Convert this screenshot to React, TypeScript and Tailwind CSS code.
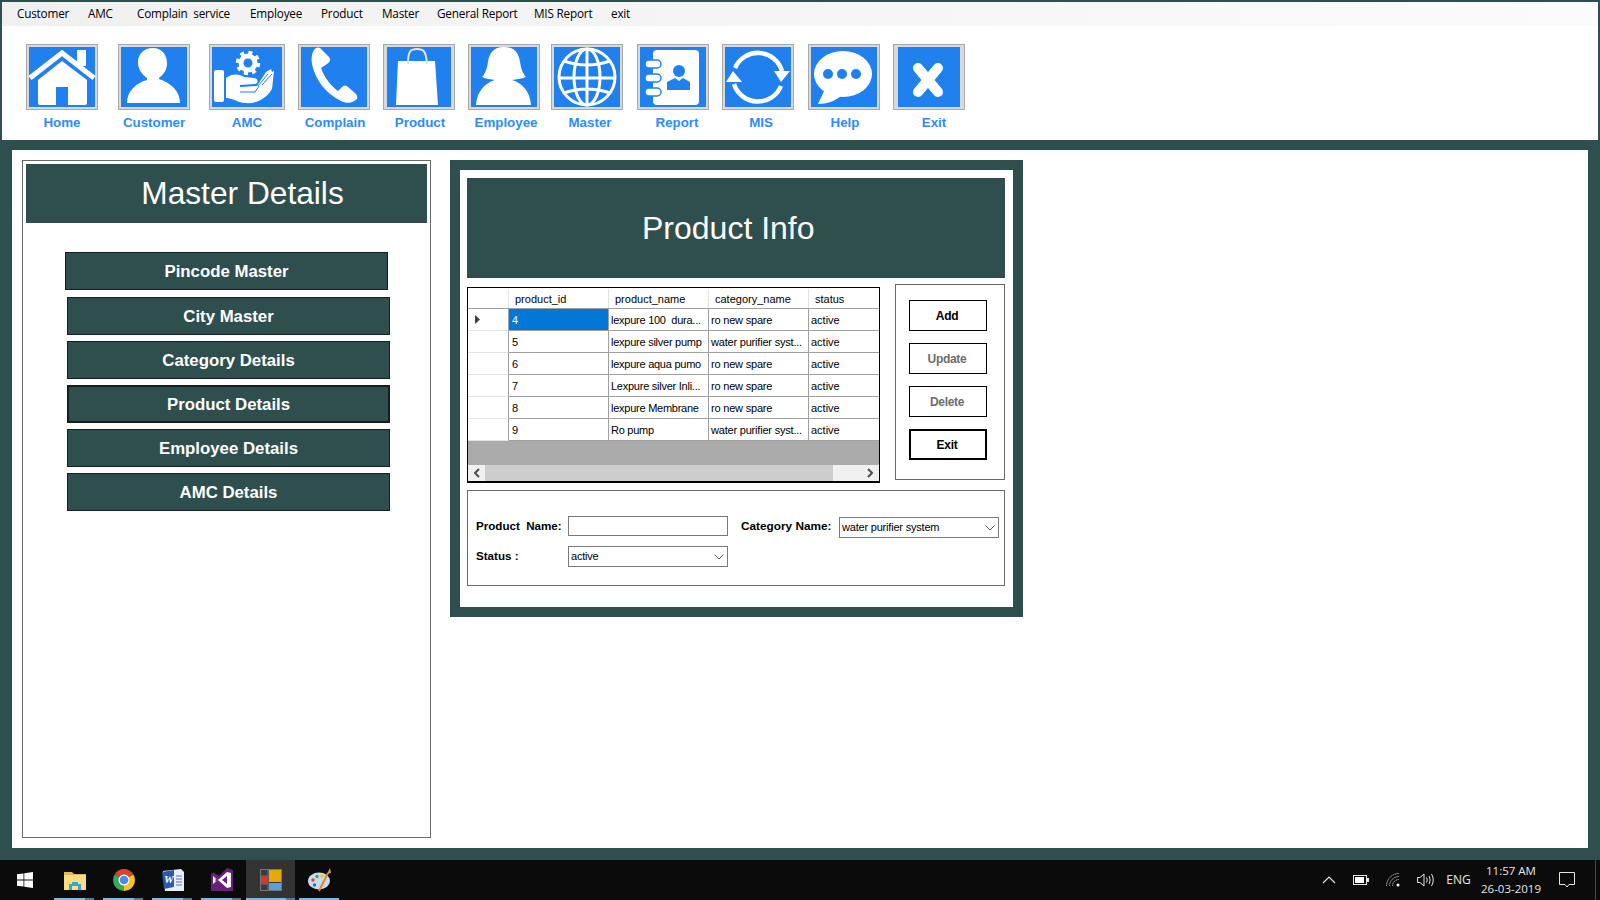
import React from "react";

const BLUE = "#2080ee";

const HomeIcon = () => (
  <svg viewBox="0 0 66 60" className="w-full h-full">
    <polyline points="1,31 33,6 65,31" fill="none" stroke="#fff" strokeWidth="5" />
    <rect x="48" y="3" width="9" height="16" fill="#fff" />
    <path d="M9 33 L33 14 L58 33 V56 Q58 58 56 58 H11 Q9 58 9 56 Z" fill="#fff" />
    <rect x="27" y="40" width="12" height="18" fill={BLUE} />
  </svg>
);

const CustomerIcon = () => (
  <svg viewBox="0 0 66 60" className="w-full h-full">
    <path
      d="M32 1 C41 1 46 8 46 16 C46 23 43 27 38 31 L38 32 C50 36 59 44 59 56 L6 56 C6 44 15 36 26 33 L26 31 C21 27 17 23 17 15 C17 7 23 1 32 1 Z"
      fill="#fff"
    />
  </svg>
);

const AmcIcon = () => (
  <svg viewBox="0 0 70 60" className="w-full h-full">
    <circle cx="36" cy="16" r="7" fill="none" stroke="#fff" strokeWidth="5" />
    <circle cx="36" cy="16" r="10.5" fill="none" stroke="#fff" strokeWidth="3.5" strokeDasharray="4 4.25" />
    <rect x="2" y="23" width="10" height="32" rx="2" fill="#fff" />
    <path
      d="M14 31 C20 26 28 27 32 30 L42 31 C46 31 47 36 43 37 L28 38 V40 L45 39 L54 25 L59 22 L60 25 L62 24 L60 42 C54 52 44 57 33 56 C27 56 20 51 14 51 Z"
      fill="#fff"
    />
    <path d="M46 39 L56 27 M50 38 L60 27 M28 45 H43 L47 39" fill="none" stroke={BLUE} strokeWidth="1" />
  </svg>
);

const PhoneIcon = () => (
  <svg viewBox="0 0 66 60" className="w-full h-full">
    <path
      d="M15 1 C11 4 10 10 11 17 C14 32 24 46 40 54 C46 57 52 56 56 52 C57 50 56 48 54 46 L47 40 C45 38 43 38 41 40 L37 44 C30 39 23 30 20 21 L26 17 C29 15 30 13 28 10 L21 3 C19 0 17 0 15 1 Z"
      fill="#fff"
    />
  </svg>
);

const BagIcon = () => (
  <svg viewBox="0 0 64 60" className="w-full h-full">
    <path d="M11 14 H48 L51 58 H9 Z" fill="#fff" />
    <path d="M21 17 C21 3 24 2 30 2 C36 2 39 3 40 17" fill="none" stroke="#e4e4e4" strokeWidth="2" />
  </svg>
);

const EmployeeIcon = () => (
  <svg viewBox="0 0 66 60" className="w-full h-full">
    <path
      d="M33 0 C45 0 48 8 49 15 C50 22 52 27 55 30 C50 32 45 32 41 33 C51 36 59 44 60 58 H5 C6 44 14 36 24 33 C20 32 15 32 11 30 C14 27 16 22 17 15 C18 8 21 0 33 0 Z"
      fill="#fff"
    />
  </svg>
);

const GlobeIcon = () => (
  <svg viewBox="0 0 66 60" className="w-full h-full" fill="none" stroke="#fff" strokeWidth="3">
    <circle cx="33" cy="30" r="28" />
    <ellipse cx="33" cy="30" rx="13" ry="28" />
    <path d="M33 2 V58 M5 31 H61 M10 14 Q33 22 56 14 M10 46 Q33 38 56 46" />
  </svg>
);

const ReportIcon = () => (
  <svg viewBox="0 0 66 60" className="w-full h-full">
    <rect x="13" y="3" width="46" height="55" rx="4" fill="#fff" />
    <circle cx="39" cy="24" r="6" fill={BLUE} />
    <path d="M27 43 V35 L35 31 L39 34 L43 31 L50 35 V43 Z" fill={BLUE} />
    <rect x="5" y="13" width="16" height="8" rx="4" fill="#fff" stroke={BLUE} strokeWidth="1.5" />
    <rect x="5" y="27" width="16" height="8" rx="4" fill="#fff" stroke={BLUE} strokeWidth="1.5" />
    <rect x="5" y="41" width="16" height="8" rx="4" fill="#fff" stroke={BLUE} strokeWidth="1.5" />
  </svg>
);

const SyncIcon = () => (
  <svg viewBox="0 0 66 60" className="w-full h-full">
    <path d="M10 21 A25 25 0 0 1 57 24" fill="none" stroke="#fff" strokeWidth="4.5" />
    <path d="M49 24 L65 24 L56 35 Z" fill="#fff" />
    <path d="M56 39 A25 25 0 0 1 9 37" fill="none" stroke="#fff" strokeWidth="4.5" />
    <path d="M1 35 L17 35 L8 24 Z" fill="#fff" />
  </svg>
);

const HelpIcon = () => (
  <svg viewBox="0 0 66 60" className="w-full h-full">
    <ellipse cx="32" cy="27" rx="29" ry="23" fill="#fff" />
    <path d="M14 42 L7 57 C16 57 24 54 30 49 Z" fill="#fff" />
    <circle cx="17" cy="27" r="5" fill={BLUE} />
    <circle cx="31" cy="27" r="5" fill={BLUE} />
    <circle cx="45" cy="27" r="5" fill={BLUE} />
  </svg>
);

const ExitIcon = () => (
  <svg viewBox="0 0 62 60" className="w-full h-full">
    <path d="M20 21 L40 45 M40 21 L20 45" stroke="#fff" strokeWidth="10" strokeLinecap="round" />
  </svg>
);

const menuItems = [
  { label: "Customer", cls: "w-[71px]" },
  { label: "AMC", cls: "w-[49px]" },
  { label: "Complain  service", cls: "w-[113px]" },
  { label: "Employee", cls: "w-[71px]" },
  { label: "Product", cls: "w-[61px]" },
  { label: "Master", cls: "w-[55px]" },
  { label: "General Report", cls: "w-[97px]" },
  { label: "MIS Report", cls: "w-[77px]" },
  { label: "exit", cls: "w-[40px]" },
];

const toolItems = [
  { label: "Home", icon: <HomeIcon />, cls: "ml-[24px] w-[72px]", pad: "px-[2px]", shift: "" },
  { label: "Customer", icon: <CustomerIcon />, cls: "ml-[20px] w-[72px]", pad: "px-[2px]", shift: "" },
  { label: "AMC", icon: <AmcIcon />, cls: "ml-[19px] w-[76px]", pad: "px-[2px]", shift: "" },
  { label: "Complain", icon: <PhoneIcon />, cls: "ml-[13px] w-[72px]", pad: "px-[2px]", shift: "pl-[2px]" },
  { label: "Product", icon: <BagIcon />, cls: "ml-[13px] w-[72px]", pad: "px-[3px]", shift: "pl-[2px]" },
  { label: "Employee", icon: <EmployeeIcon />, cls: "ml-[13px] w-[72px]", pad: "px-[2px]", shift: "pl-[4px]" },
  { label: "Master", icon: <GlobeIcon />, cls: "ml-[11px] w-[72px]", pad: "px-[2px]", shift: "pl-[6px]" },
  { label: "Report", icon: <ReportIcon />, cls: "ml-[14px] w-[72px]", pad: "px-[2px]", shift: "pl-[8px]" },
  { label: "MIS", icon: <SyncIcon />, cls: "ml-[13px] w-[72px]", pad: "px-[2px]", shift: "pl-[6px]" },
  { label: "Help", icon: <HelpIcon />, cls: "ml-[14px] w-[72px]", pad: "px-[2px]", shift: "pl-[2px]" },
  { label: "Exit", icon: <ExitIcon />, cls: "ml-[13px] w-[72px]", pad: "px-[4px]", shift: "pl-[10px]" },
];

const masterButtons = [
  { label: "Pincode Master", cls: "ml-[39px] mt-[29px] border" },
  { label: "City Master", cls: "ml-[41px] mt-[7px] border" },
  { label: "Category Details", cls: "ml-[41px] mt-[6px] border" },
  { label: "Product Details", cls: "ml-[41px] mt-[6px] border-2" },
  { label: "Employee Details", cls: "ml-[41px] mt-[6px] border" },
  { label: "AMC Details", cls: "ml-[41px] mt-[6px] border" },
];

const rows = [
  { id: "4", name: "lexpure 100  dura...", category: "ro new spare" },
  { id: "5", name: "lexpure silver pump", category: "water purifier syst..." },
  { id: "6", name: "lexpure aqua pumo", category: "ro new spare" },
  { id: "7", name: "Lexpure silver Inli...", category: "ro new spare" },
  { id: "8", name: "lexpure Membrane", category: "ro new spare" },
  { id: "9", name: "Ro pump", category: "water purifier syst..." },
];

const Chevron = () => (
  <svg viewBox="0 0 10 6" className="w-[10px] h-[6px]" fill="none" stroke="#555" strokeWidth="1">
    <path d="M0.5 0.5 L5 5 L9.5 0.5" />
  </svg>
);

const DropDown = ({ value }: { value: string }) => (
  <div className="w-[160px] h-[21px] border border-[#7a7a7a] flex items-center justify-between pl-[2px] pr-[3px] text-[11px] tracking-[-0.2px] text-black">
    <span>{value}</span>
    <Chevron />
  </div>
);

const ActionButton = ({ label, cls }: { label: string; cls: string }) => (
  <div className={`w-[78px] h-[31px] border-black flex items-center justify-center pr-[2px] text-[12px] font-bold tracking-[-0.3px] ${cls}`}>
    {label}
  </div>
);

const TaskSlot = ({
  children,
  active,
  stacked,
}: {
  children: React.ReactNode;
  active?: boolean;
  stacked?: boolean;
}) => (
  <div className={`relative w-[49px] h-[40px] flex items-center justify-center ${active ? "bg-[#333333]" : ""}`}>
    {children}
    <div className={`absolute bottom-0 h-[2px] bg-[#76b9ed] ${active ? "left-0 right-0" : "left-[4px] right-[5px]"}`} />
    {stacked && <div className={`absolute bottom-0 h-[2px] w-[9px] bg-[#4f7c9e] ${active ? "right-0" : "right-[5px]"}`} />}
  </div>
);

const App = () => {
  return (
    <div className="w-[1600px] h-[900px] overflow-hidden bg-[#2f4f4f] flex flex-col font-['Liberation_Sans',Arial,sans-serif]">
      <div className="mt-[2px] mx-[2px] h-[138px] bg-white shrink-0">
        <div className="h-[24px] flex items-center pl-[15px] bg-gradient-to-r from-[#f0f0f0] to-[#fbfbfb] text-[11.75px] tracking-[-0.2px] text-black font-['Open_Sans',sans-serif]">
          {menuItems.map((item) => (
            <span key={item.label} className={`whitespace-pre shrink-0 ${item.cls}`}>
              {item.label}
            </span>
          ))}
        </div>
        <div className="flex pt-[18px]">
          {toolItems.map((item) => (
            <div key={item.label} className={`shrink-0 flex flex-col ${item.cls}`}>
              <div className={`h-[66px] border border-[#a9a9a9] bg-[#d9d9d9] py-[2px] ${item.pad}`}>
                <div className="w-full h-[60px] bg-[#2080ee]">{item.icon}</div>
              </div>
              <div className={`mt-[5px] h-[16px] leading-[16px] text-center whitespace-nowrap text-[13.33px] font-bold text-[#2b8cff] ${item.shift}`}>
                {item.label}
              </div>
            </div>
          ))}
        </div>
      </div>

      <div className="mt-[10px] mx-[12px] h-[698px] bg-white shrink-0 flex items-start pl-[10px] pt-[10px]">
        <div className="w-[409px] h-[678px] border border-[#696969] p-[3px] shrink-0">
          <div className="h-[59px] bg-[#2f4f4f] flex items-center justify-center pl-[32px] text-white text-[31.7px] leading-none">
            Master Details
          </div>
          {masterButtons.map((btn) => (
            <div
              key={btn.label}
              className={`w-[323px] h-[38px] bg-[#2f4f4f] border-[#141f1f] flex items-center justify-center pt-[1px] text-white text-[16.8px] font-bold ${btn.cls}`}
            >
              {btn.label}
            </div>
          ))}
        </div>

        <div className="ml-[19px] w-[573px] h-[457px] border-[10px] border-[#2f4f4f] bg-white pt-[8px] pl-[7px] shrink-0">
          <div className="w-[538px] h-[100px] bg-[#2f4f4f] flex items-center pl-[175px] text-white text-[32px] leading-none">
            Product Info
          </div>

          <div className="flex items-start mt-[6px]">
            <div className="mt-[3px] w-[413px] h-[196px] border border-b-2 border-black pt-[1px] flex flex-col text-[11px] text-black shrink-0">
              <div className="flex h-[20px] border-b border-[#a0a0a0] shrink-0">
                <div className="w-[41px] border-r border-[#e3e3e3]" />
                <div className="w-[100px] border-r border-[#e3e3e3] pl-[6px] leading-[21px]">product_id</div>
                <div className="w-[100px] border-r border-[#e3e3e3] pl-[6px] leading-[21px]">product_name</div>
                <div className="w-[100px] border-r border-[#e3e3e3] pl-[6px] leading-[21px]">category_name</div>
                <div className="flex-1 pl-[6px] leading-[21px]">status</div>
              </div>
              {rows.map((row, i) => (
                <div key={row.id} className="flex h-[22px] shrink-0 leading-[22px]">
                  <div className="w-[41px] border-r border-b border-r-[#a0a0a0] border-b-[#e3e3e3] flex items-center pl-[7px]">
                    {i === 0 && (
                      <svg viewBox="0 0 5 9" className="w-[5px] h-[9px]">
                        <path d="M0 0 L5 4.5 L0 9 Z" fill="#404040" />
                      </svg>
                    )}
                  </div>
                  <div className={`w-[100px] border-r border-b border-[#a0a0a0] pl-[3px] ${i === 0 ? "bg-[#0078d7] text-white" : ""}`}>
                    {row.id}
                  </div>
                  <div className="w-[100px] border-r border-b border-[#a0a0a0] pl-[2px] whitespace-pre tracking-[-0.25px] overflow-hidden">
                    {row.name}
                  </div>
                  <div className="w-[100px] border-r border-b border-[#a0a0a0] pl-[2px] whitespace-pre tracking-[-0.2px] overflow-hidden">
                    {row.category}
                  </div>
                  <div className="flex-1 border-b border-[#a0a0a0] pl-[2px]">active</div>
                </div>
              ))}
              <div className="h-[24px] bg-[#ababab] shrink-0" />
              <div className="h-[16px] bg-[#f0f0f0] flex shrink-0">
                <div className="w-[17px] flex items-center justify-center">
                  <svg viewBox="0 0 6 10" className="w-[6px] h-[10px]" fill="none" stroke="#505050" strokeWidth="2">
                    <path d="M5 1 L1 5 L5 9" />
                  </svg>
                </div>
                <div className="w-[348px] bg-[#cdcdcd]" />
                <div className="flex-1 flex items-center justify-end pr-[6px]">
                  <svg viewBox="0 0 6 10" className="w-[6px] h-[10px]" fill="none" stroke="#505050" strokeWidth="2">
                    <path d="M1 1 L5 5 L1 9" />
                  </svg>
                </div>
              </div>
            </div>

            <div className="ml-[15px] w-[110px] h-[196px] border border-[#696969] pl-[13px] pt-[15px] flex flex-col gap-[12px] shrink-0">
              <ActionButton label="Add" cls="border text-black" />
              <ActionButton label="Update" cls="border text-[#6d6d6d]" />
              <ActionButton label="Delete" cls="border text-[#6d6d6d]" />
              <ActionButton label="Exit" cls="border-2 text-black" />
            </div>
          </div>

          <div className="mt-[7px] w-[538px] h-[96px] border border-[#696969] pl-[8px] pt-[25px]">
            <div className="flex items-start">
              <div className="w-[92px] h-[20px] leading-[20px] text-[11.6px] font-bold text-black whitespace-pre">Product  Name:</div>
              <div className="w-[160px] h-[20px] border border-[#7a7a7a]" />
              <div className="ml-[13px] w-[98px] h-[21px] leading-[21px] text-[11.8px] font-bold text-black whitespace-pre">Category Name:</div>
              <div className="mt-[1px]">
                <DropDown value="water purifier system" />
              </div>
            </div>
            <div className="flex items-center mt-[8px]">
              <div className="w-[92px] pb-[2px] text-[11.6px] font-bold text-black">Status :</div>
              <DropDown value="active" />
            </div>
          </div>
        </div>
      </div>

      <div className="mt-[12px] h-[40px] bg-[#0b0b0b] flex items-center shrink-0">
        <div className="w-[50px] h-[40px] flex items-center justify-center shrink-0">
          <svg viewBox="0 0 16 16" className="w-[16px] h-[16px]">
            <path d="M0 2.3 L6.5 1.4 V7.5 H0 Z M7.3 1.3 L16 0 V7.5 H7.3 Z M0 8.5 H6.5 V14.6 L0 13.7 Z M7.3 8.5 H16 V16 L7.3 14.7 Z" fill="#fff" />
          </svg>
        </div>
        <TaskSlot stacked>
          <svg viewBox="0 0 22 19" className="w-[22px] h-[19px]">
            <path d="M0 1 H8 L10 3 H22 V19 H0 Z" fill="#e6b94a" />
            <rect x="0" y="4" width="22" height="15" fill="#fbdc80" />
            <path d="M5 19 V13 H8 V11 H14 V13 H17 V19 H14 V15 H8 V19 Z" fill="#2fa6e0" />
          </svg>
        </TaskSlot>
        <TaskSlot stacked>
          <svg viewBox="0 0 24 24" className="w-[24px] h-[24px]">
            <path d="M12 12 L2.5 6.5 A11 11 0 0 1 21.5 6.5 Z" fill="#d9432f" />
            <path d="M12 12 L21.5 6.5 A11 11 0 0 1 12 23 Z" fill="#f5c518" />
            <path d="M12 12 L12 23 A11 11 0 0 1 2.5 6.5 Z" fill="#3aa757" />
            <circle cx="12" cy="12" r="5.5" fill="#fff" />
            <circle cx="12" cy="12" r="4.3" fill="#4a8af4" />
          </svg>
        </TaskSlot>
        <TaskSlot stacked>
          <svg viewBox="0 0 24 23" className="w-[24px] h-[23px]">
            <path d="M2 2 L20 0 L23 3 V22 L4 22 Z" fill="#e8eef7" />
            <path d="M1 3 L13 1 V18 L3 20 Z" fill="#2a5aa8" />
            <text x="3" y="14" fontSize="11" fontWeight="bold" fontStyle="italic" fill="#fff" fontFamily="Liberation Serif">W</text>
            <path d="M15 7 H21 M15 10 H21 M15 13 H21 M15 16 H21" stroke="#4a76b8" strokeWidth="1" />
          </svg>
        </TaskSlot>
        <TaskSlot stacked>
          <svg viewBox="0 0 22 24" className="w-[22px] h-[24px]">
            <path d="M0 6 V23 H22 V2 L16 0 L8 8 L3 4.5 Z" fill="#68217a" />
            <path d="M2 8 L7 12 L16 4 L20 5 V19 L16 20 L7 12 L2 16 Z" fill="#fff" />
            <path d="M4.5 10 V14 L7 12 Z M16 8 V16 L11 12 Z" fill="#68217a" />
          </svg>
        </TaskSlot>
        <TaskSlot active stacked>
          <svg viewBox="0 0 22 22" className="w-[22px] h-[22px]">
            <rect x="0.5" y="0.5" width="21" height="21" fill="#3a3a3a" stroke="#777" />
            <path d="M8 1 V21 M1 7 H8 M1 15 H8" stroke="#777" strokeWidth="1" />
            <rect x="1" y="7" width="7" height="8" fill="#cf3a30" />
            <rect x="9" y="1" width="12" height="12" fill="#e5a90b" />
            <rect x="9" y="14" width="12" height="7" fill="#5d9ae0" />
          </svg>
        </TaskSlot>
        <TaskSlot>
          <svg viewBox="0 0 24 24" className="w-[24px] h-[24px]">
            <ellipse cx="11" cy="13" rx="11" ry="8.5" fill="#c9dcec" />
            <circle cx="5" cy="12" r="1.7" fill="#d9432f" />
            <circle cx="9" cy="8.5" r="1.7" fill="#3aa757" />
            <circle cx="14" cy="8" r="1.7" fill="#f5c518" />
            <circle cx="6.5" cy="17" r="1.7" fill="#2a6fd0" />
            <path d="M11 23 L20 5" stroke="#e2851f" strokeWidth="2" />
            <path d="M19 6 L22 0 L23 5 Z" fill="#c9a36a" />
          </svg>
        </TaskSlot>

        <div className="ml-[969px] flex items-center text-[#e6e6e6] font-['Open_Sans',sans-serif] shrink-0">
          <div className="w-[32px] flex justify-center">
            <svg viewBox="0 0 14 8" className="w-[14px] h-[8px]" fill="none" stroke="#e6e6e6" strokeWidth="1.2">
              <path d="M1 7 L7 1 L13 7" />
            </svg>
          </div>
          <div className="w-[32px] flex justify-center">
            <svg viewBox="0 0 16 10" className="w-[16px] h-[10px]">
              <rect x="0.5" y="0.5" width="13" height="9" fill="none" stroke="#e6e6e6" />
              <rect x="2" y="2" width="9" height="6" fill="#fff" />
              <rect x="14" y="3" width="2" height="4" fill="#e6e6e6" />
            </svg>
          </div>
          <div className="w-[32px] flex justify-center">
            <svg viewBox="0 0 14 14" className="w-[14px] h-[14px]" fill="none" stroke="#bdbdbd" strokeWidth="1">
              <path d="M0.5 13 A12.5 12.5 0 0 1 13 0.5" strokeDasharray="1.5 0.7" />
              <path d="M3.5 13 A9.5 9.5 0 0 1 13 3.5" strokeDasharray="1.5 0.7" />
              <path d="M6.5 13 A6.5 6.5 0 0 1 13 6.5" strokeDasharray="1.5 0.7" />
              <circle cx="12" cy="12" r="1.5" fill="#fff" stroke="none" />
            </svg>
          </div>
          <div className="w-[32px] flex justify-center">
            <svg viewBox="0 0 17 14" className="w-[17px] h-[14px]" fill="none" stroke="#e6e6e6" strokeWidth="1">
              <path d="M0.5 4.5 H3 L7 1 V13 L3 9.5 H0.5 Z" />
              <path d="M9.5 4.5 Q11 7 9.5 9.5 M12 3 Q14.5 7 12 11 M14.5 1 Q18 7 14.5 13" />
            </svg>
          </div>
          <div className="w-[35px] text-center text-[12px]">ENG</div>
          <div className="w-[70px] flex flex-col items-center text-[11.5px] leading-[18px]">
            <span>11:57 AM</span>
            <span>26-03-2019</span>
          </div>
          <div className="w-[42px] flex justify-center">
            <svg viewBox="0 0 16 16" className="w-[16px] h-[16px]" fill="none" stroke="#e6e6e6" strokeWidth="1">
              <path d="M0.5 0.5 H15.5 V12.5 H10 L8 15 L6 12.5 H0.5 Z" />
            </svg>
          </div>
          <div className="ml-[7px] w-[1px] h-[40px] bg-[#4a4a4a]" />
        </div>
      </div>
    </div>
  );
};

export default App;
